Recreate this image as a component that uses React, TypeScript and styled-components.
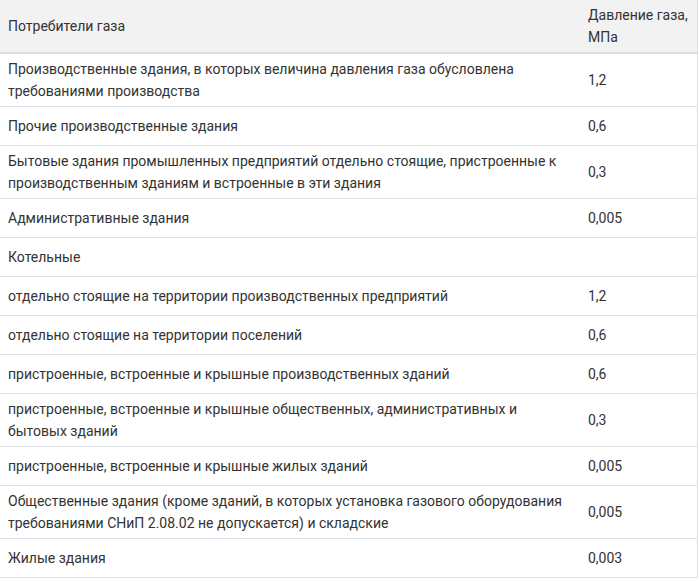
import styled, { createGlobalStyle } from "styled-components";

const GlobalStyle = createGlobalStyle`
  body {
    margin: 0;
    background: #ffffff;
    font-family: Roboto, "Liberation Sans", Arial, sans-serif;
  }
`;

const Table = styled.table`
  width: 698px;
  table-layout: fixed;
  border-collapse: collapse;
  border-right: 1px solid #dcdfe5;
  font-size: 14px;
  line-height: 22px;
  color: #333333;
`;

// widths are content widths, padding comes on top
const HeadCell = styled.th<{ $w: number }>`
  width: ${(p) => p.$w}px;
  padding: 4px 8px;
  text-align: left;
  font-weight: 400;
  background: #f2f2f2;
  border-bottom: 2px solid #dadde4;
  vertical-align: middle;
`;

const Row = styled.tr`
  border-bottom: 1px solid #dcdfe5;
`;

const Cell = styled.td`
  padding: 4px 8px;
  height: 30px;
  vertical-align: middle;
`;

interface IRow {
  name: string;
  value: string;
}

const rows: IRow[] = [
  {
    name: "Производственные здания, в которых величина давления газа обусловлена требованиями производства",
    value: "1,2",
  },
  { name: "Прочие производственные здания", value: "0,6" },
  {
    name: "Бытовые здания промышленных предприятий отдельно стоящие, пристроенные к производственным зданиям и встроенные в эти здания",
    value: "0,3",
  },
  { name: "Административные здания", value: "0,005" },
  { name: "Котельные", value: "" },
  { name: "отдельно стоящие на территории производственных предприятий", value: "1,2" },
  { name: "отдельно стоящие на территории поселений", value: "0,6" },
  { name: "пристроенные, встроенные и крышные производственных зданий", value: "0,6" },
  {
    name: "пристроенные, встроенные и крышные общественных, административных и бытовых зданий",
    value: "0,3",
  },
  { name: "пристроенные, встроенные и крышные жилых зданий", value: "0,005" },
  {
    name: "Общественные здания (кроме зданий, в которых установка газового оборудования требованиями СНиП 2.08.02 не допускается) и складские",
    value: "0,005",
  },
  { name: "Жилые здания", value: "0,003" },
];

function App() {
  return (
    <>
      <GlobalStyle />
      <Table>
        <thead>
          <tr>
            <HeadCell $w={564}>Потребители газа</HeadCell>
            <HeadCell $w={101}>Давление газа, МПа</HeadCell>
          </tr>
        </thead>
        <tbody>
          {rows.map((row) => (
            <Row key={row.name}>
              <Cell>{row.name}</Cell>
              <Cell>{row.value}</Cell>
            </Row>
          ))}
        </tbody>
      </Table>
    </>
  );
}

export default App;
